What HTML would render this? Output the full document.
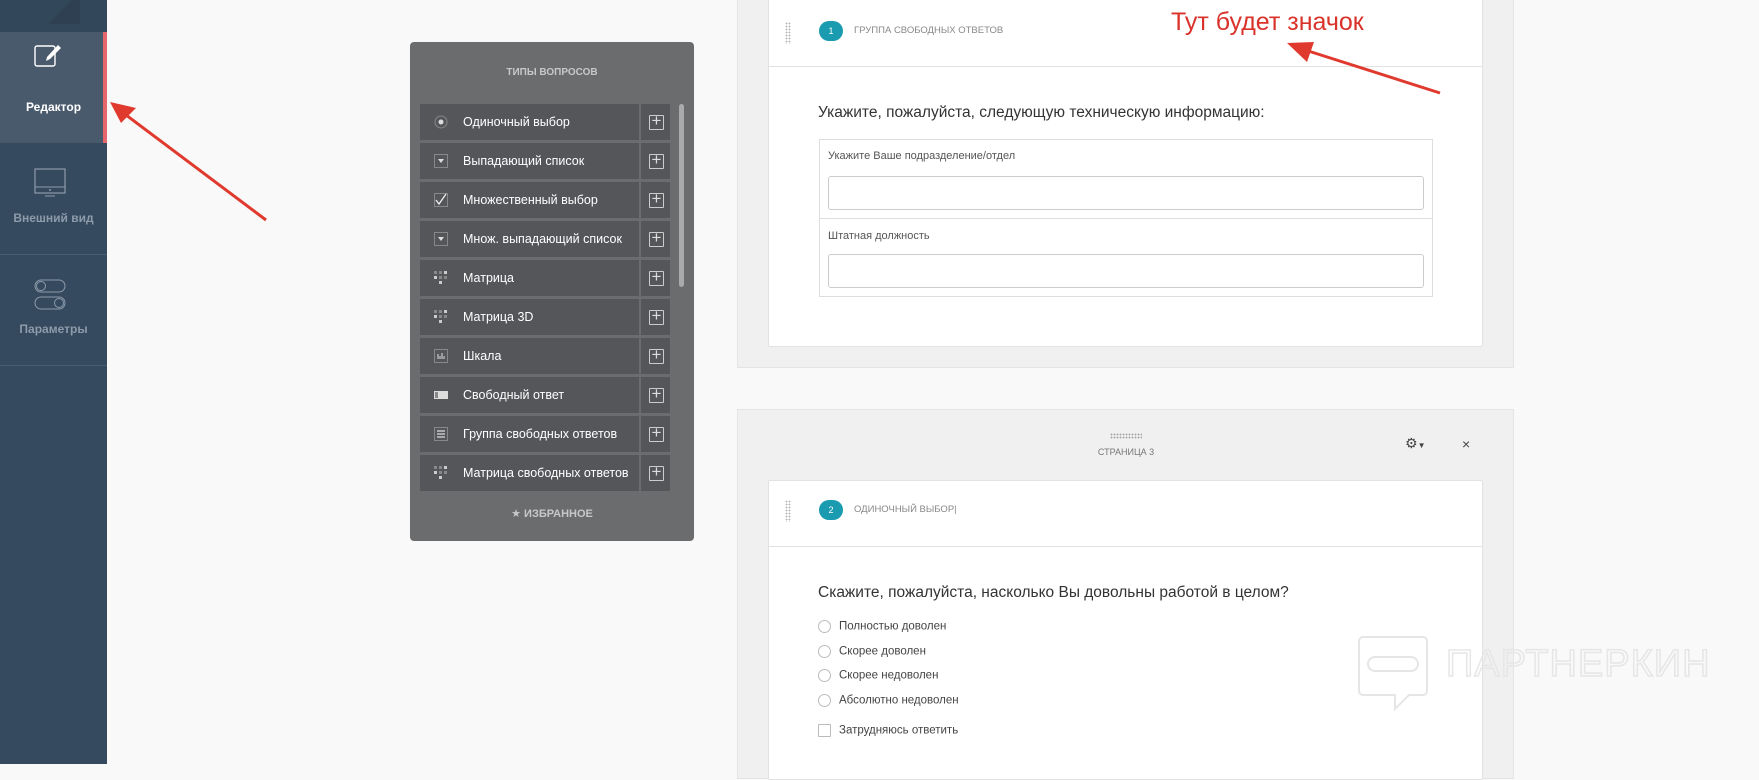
<!DOCTYPE html>
<html><head><meta charset="utf-8"><style>
*{margin:0;padding:0;box-sizing:border-box}
body{width:1759px;height:764px;overflow:hidden;background:#f9f9f9;font-family:"Liberation Sans","DejaVu Sans",sans-serif;position:relative}
.a{position:absolute}
#sb{left:0;top:0;width:107px;height:764px;background:#354a5e}
.nav{position:absolute;left:0;width:107px;text-align:center;font-size:12px;font-weight:bold;color:#8d9bab}
.row{position:absolute;left:420px;width:250px;height:36px;background:#54565a;color:#fff;font-size:12.5px}
.row .t{position:absolute;left:43px;top:11px}
.row .ic{position:absolute;left:14px;top:11px;width:14px;height:14px}
.row .pl{position:absolute;left:219px;top:0;width:31px;height:36px;border-left:2px solid #6b6c6e}
.row .pl:before{content:"";position:absolute;left:8px;top:11px;width:13px;height:13px;border:1px solid #ccc;border-radius:1px}
.row .pl:after{content:"+";position:absolute;left:8px;top:6px;width:15px;text-align:center;color:#ddd;font-size:17px;line-height:22px}
.card{position:absolute;left:768px;width:715px;background:#fff;border:1px solid #e2e2e2;border-radius:2px}
.badge{position:absolute;width:24px;height:20px;border-radius:10px;background:#1a9bb0;color:#fff;font-size:9px;text-align:center;line-height:20px}
.hl{position:absolute;font-size:9.5px;color:#888}
.dots{position:absolute;width:6px;height:22px;background-image:radial-gradient(#bbb 40%,transparent 45%);background-size:3px 3px}
.opt{position:absolute;left:818px;font-size:11.5px;color:#444}
.opt i{display:inline-block;width:13px;height:13px;border:1px solid #bbb;border-radius:50%;vertical-align:middle;margin-right:8px}
</style></head><body>
<div id="sb" class="a">
 <div class="a" style="left:0;top:0;width:107px;height:32px;background:#33475a"></div>
 <div class="a" style="left:40px;top:0;width:40px;height:24px;background:linear-gradient(135deg,#33475a 50%,#2c3e50 50%);opacity:.8"></div>
 <div class="a" style="left:0;top:32px;width:107px;height:111px;background:#4a5a6d"></div>
 <div class="a" style="left:103px;top:32px;width:4px;height:111px;background:#e5676b"></div>
 <svg class="a" style="left:34px;top:40px" width="36" height="36" viewBox="0 0 36 36"><rect x="1" y="6" width="20" height="20" rx="2" fill="none" stroke="#fff" stroke-width="1.4"/><path d="M13 17 L24 5 L27 8 L16 19 L12 21 Z" fill="#fff"/></svg>
 <div class="nav" style="top:100px;color:#fff">Редактор</div>
 <svg class="a" style="left:34px;top:168px" width="36" height="32"><rect x="1" y="1" width="30" height="24" fill="none" stroke="#8d9bab" stroke-width="1.2"/><line x1="1" y1="19" x2="31" y2="19" stroke="#8d9bab"/><circle cx="16" cy="22" r="1" fill="#8d9bab"/><line x1="11" y1="28" x2="21" y2="28" stroke="#8d9bab"/></svg>
 <div class="nav" style="top:211px">Внешний вид</div>
 <div class="a" style="left:0;top:254px;width:107px;height:1px;background:#4a5d70"></div>
 <svg class="a" style="left:34px;top:278px" width="36" height="34"><rect x="1" y="2" width="30" height="12" rx="6" fill="none" stroke="#8d9bab"/><circle cx="7" cy="8" r="4.5" fill="none" stroke="#8d9bab"/><rect x="1" y="19" width="30" height="12" rx="6" fill="none" stroke="#8d9bab"/><circle cx="25" cy="25" r="4.5" fill="none" stroke="#8d9bab"/></svg>
 <div class="nav" style="top:322px">Параметры</div>
 <div class="a" style="left:0;top:365px;width:107px;height:1px;background:#4a5d70"></div>
</div>

<div class="a" style="left:410px;top:42px;width:284px;height:499px;background:#6b6c6e;border-radius:4px"></div>
<div class="a" style="left:410px;top:67px;width:284px;text-align:center;color:#c8c8c8;font-size:10px;font-weight:bold">ТИПЫ ВОПРОСОВ</div>
<div class="a" style="left:679px;top:104px;width:5px;height:183px;background:#a9aaac;border-radius:3px"></div>

<div class="row" style="top:104px"><svg class="ic" viewBox="0 0 14 14"><circle cx="7" cy="7" r="6" fill="none" stroke="#888"/><circle cx="7" cy="7" r="2.5" fill="#ddd"/></svg><span class="t">Одиночный выбор</span><span class="pl"></span></div>
<div class="row" style="top:143px"><svg class="ic" viewBox="0 0 14 14"><rect x=".5" y=".5" width="13" height="13" fill="none" stroke="#888"/><path d="M4 5h6l-3 4z" fill="#ddd"/></svg><span class="t">Выпадающий список</span><span class="pl"></span></div>
<div class="row" style="top:182px"><svg class="ic" viewBox="0 0 14 14"><rect x=".5" y=".5" width="13" height="13" fill="none" stroke="#888"/><path d="M2 7l3 4 7-10" fill="none" stroke="#eee" stroke-width="1.3"/></svg><span class="t">Множественный выбор</span><span class="pl"></span></div>
<div class="row" style="top:221px"><svg class="ic" viewBox="0 0 14 14"><rect x=".5" y=".5" width="13" height="13" fill="none" stroke="#888"/><path d="M4 5h6l-3 4z" fill="#ddd"/></svg><span class="t">Множ. выпадающий список</span><span class="pl"></span></div>
<div class="row" style="top:260px"><svg class="ic" viewBox="0 0 14 14" fill="#ccc"><rect x="0" y="0" width="3" height="3" fill="#888"/><rect x="5" y="0" width="3" height="3" fill="#888"/><rect x="10" y="0" width="3" height="3"/><rect x="0" y="5" width="3" height="3"/><rect x="5" y="5" width="3" height="3" fill="#888"/><rect x="10" y="5" width="3" height="3" fill="#888"/><rect x="5" y="10" width="3" height="3"/></svg><span class="t">Матрица</span><span class="pl"></span></div>
<div class="row" style="top:299px"><svg class="ic" viewBox="0 0 14 14" fill="#ccc"><rect x="0" y="0" width="3" height="3" fill="#888"/><rect x="5" y="0" width="3" height="3" fill="#888"/><rect x="10" y="0" width="3" height="3"/><rect x="0" y="5" width="3" height="3"/><rect x="5" y="5" width="3" height="3" fill="#888"/><rect x="10" y="5" width="3" height="3" fill="#888"/><rect x="5" y="10" width="3" height="3"/></svg><span class="t">Матрица 3D</span><span class="pl"></span></div>
<div class="row" style="top:338px"><svg class="ic" viewBox="0 0 14 14"><rect x=".5" y=".5" width="13" height="13" fill="none" stroke="#888"/><path d="M4 10V5M6 10V7M8 10V4M10 10V7" stroke="#ddd"/></svg><span class="t">Шкала</span><span class="pl"></span></div>
<div class="row" style="top:377px"><svg class="ic" viewBox="0 0 14 14"><rect x="0" y="3" width="14" height="8" fill="#ddd"/><rect x="1" y="4" width="3" height="6" fill="#888"/></svg><span class="t">Свободный ответ</span><span class="pl"></span></div>
<div class="row" style="top:416px"><svg class="ic" viewBox="0 0 14 14"><rect x=".5" y=".5" width="13" height="13" fill="none" stroke="#888"/><path d="M3 4h8M3 7h8M3 10h8" stroke="#ddd" stroke-width="1.3"/></svg><span class="t">Группа свободных ответов</span><span class="pl"></span></div>
<div class="row" style="top:455px"><svg class="ic" viewBox="0 0 14 14" fill="#ccc"><rect x="0" y="0" width="3" height="3" fill="#888"/><rect x="5" y="0" width="3" height="3" fill="#888"/><rect x="10" y="0" width="3" height="3"/><rect x="0" y="5" width="3" height="3"/><rect x="5" y="5" width="3" height="3" fill="#888"/><rect x="10" y="5" width="3" height="3" fill="#888"/><rect x="5" y="10" width="3" height="3"/></svg><span class="t">Матрица свободных ответов</span><span class="pl"></span></div>
<div class="a" style="left:410px;top:507px;width:284px;text-align:center;color:#c8c8c8;font-size:11px;font-weight:bold">★ ИЗБРАННОЕ</div>

<div class="a" style="left:737px;top:-2px;width:777px;height:370px;background:#f0f0f0;border:1px solid #e4e4e4"></div>
<div class="card" style="top:-2px;height:349px">
 <div class="a" style="left:0;top:67px;width:713px;height:1px;background:#e2e2e2"></div>
</div>
<div class="dots" style="left:785px;top:22px"></div>
<div class="badge" style="left:819px;top:21px">1</div>
<div class="hl" style="left:854px;top:25px">ГРУППА СВОБОДНЫХ ОТВЕТОВ</div>
<div class="a" style="left:818px;top:104px;font-size:15.5px;color:#333">Укажите, пожалуйста, следующую техническую информацию:</div>
<div class="a" style="left:819px;top:139px;width:614px;height:158px;border:1px solid #ddd"></div>
<div class="a" style="left:819px;top:218px;width:614px;height:1px;background:#ddd"></div>
<div class="a" style="left:828px;top:150px;font-size:11px;color:#555">Укажите Ваше подразделение/отдел</div>
<div class="a" style="left:828px;top:176px;width:596px;height:34px;border:1px solid #ccc;border-radius:3px;background:#fff"></div>
<div class="a" style="left:828px;top:230px;font-size:11px;color:#555">Штатная должность</div>
<div class="a" style="left:828px;top:254px;width:596px;height:34px;border:1px solid #ccc;border-radius:3px;background:#fff"></div>

<div class="a" style="left:737px;top:409px;width:777px;height:370px;background:#f0f0f0;border:1px solid #e4e4e4"></div>
<div class="a" style="left:1110px;top:433px;width:32px;height:6px;background-image:radial-gradient(#aaa 40%,transparent 45%);background-size:3px 3px"></div>
<div class="a" style="left:1076px;top:447px;width:100px;text-align:center;font-size:9px;color:#777">СТРАНИЦА 3</div>
<div class="a" style="left:1405px;top:435px;font-size:14px;color:#444">⚙<span style="font-size:8px">▼</span></div>
<div class="a" style="left:1462px;top:436px;font-size:14px;color:#444">×</div>
<div class="card" style="top:480px;height:300px">
 <div class="a" style="left:0;top:65px;width:713px;height:1px;background:#e2e2e2"></div>
</div>
<div class="dots" style="left:785px;top:500px"></div>
<div class="badge" style="left:819px;top:500px">2</div>
<div class="hl" style="left:854px;top:504px">ОДИНОЧНЫЙ ВЫБОР|</div>
<div class="a" style="left:818px;top:584px;font-size:15.5px;color:#333">Скажите, пожалуйста, насколько Вы довольны работой в целом?</div>
<div class="opt" style="top:620px"><i></i>Полностью доволен</div>
<div class="opt" style="top:645px"><i></i>Скорее доволен</div>
<div class="opt" style="top:669px"><i></i>Скорее недоволен</div>
<div class="opt" style="top:694px"><i></i>Абсолютно недоволен</div>
<div class="opt" style="top:724px"><i style="border-radius:1px"></i>Затрудняюсь ответить</div>

<svg class="a" style="left:1358px;top:635px" width="72" height="80"><path d="M4 2h60a4 4 0 0 1 4 4v50a4 4 0 0 1-4 4H50l-14 14V60H4a4 4 0 0 1-4-4V6a4 4 0 0 1 4-4z" fill="none" stroke="#e6e6e6" stroke-width="2" transform="translate(1,0)"/><rect x="10" y="22" width="50" height="14" rx="7" fill="none" stroke="#e6e6e6" stroke-width="2"/></svg>
<div class="a" style="left:1446px;top:643px;font-size:38px;color:transparent;-webkit-text-stroke:1.5px #e6e6e6;letter-spacing:1px">ПАРТНЕРКИН</div>

<div class="a" style="left:1171px;top:8px;font-size:25px;color:#d9322a">Тут будет значок</div>
<svg class="a" style="left:0;top:0" width="1759" height="764">
 <line x1="266" y1="220" x2="122" y2="112" stroke="#e03a2f" stroke-width="3"/>
 <path d="M110 102 L136 108 L121 123 Z" fill="#e03a2f"/>
 <line x1="1440" y1="93" x2="1302" y2="49" stroke="#e03a2f" stroke-width="3"/>
 <path d="M1287 43 L1314 42 L1307 62 Z" fill="#e03a2f"/>
</svg>
</body></html>
